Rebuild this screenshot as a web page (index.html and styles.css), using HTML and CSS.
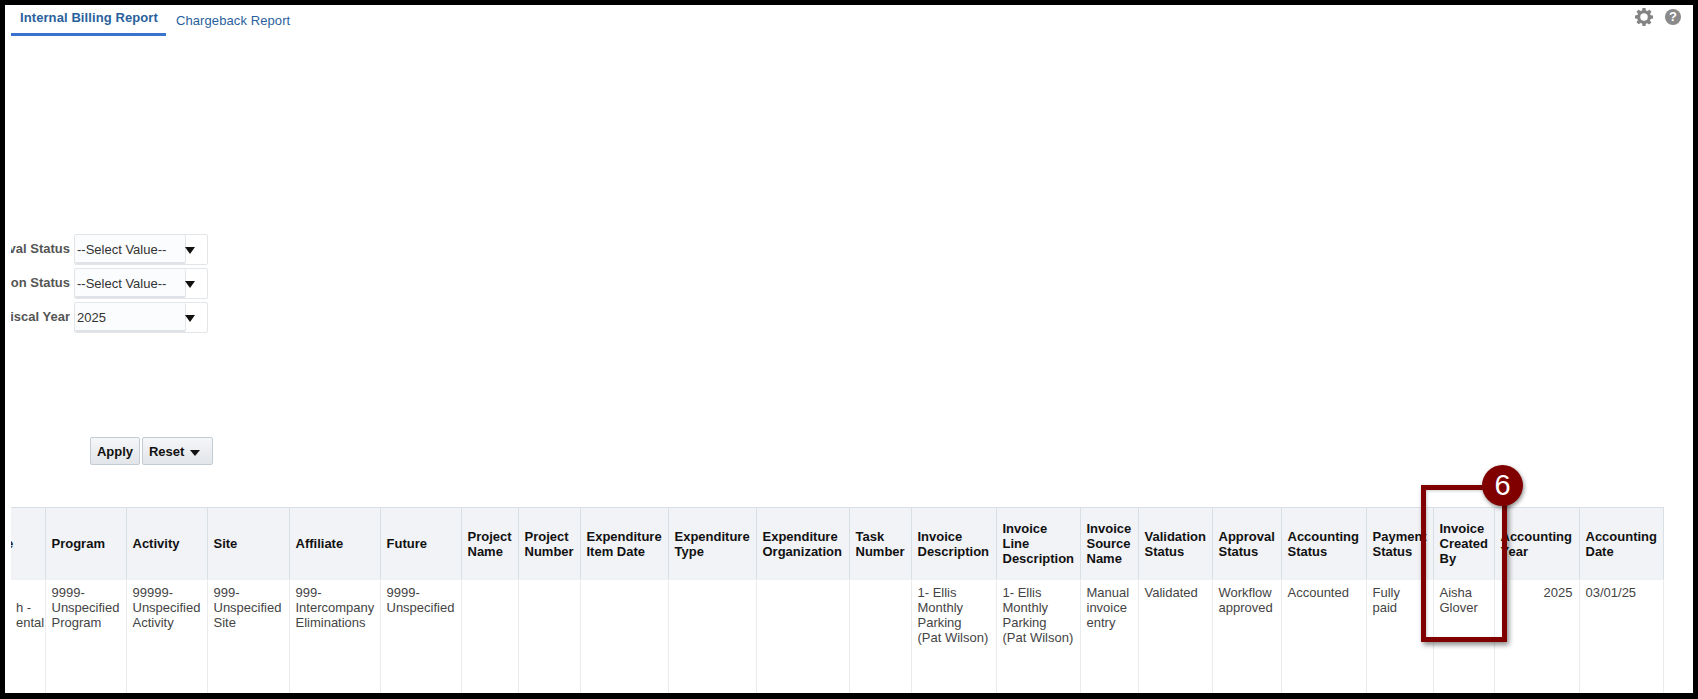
FILE: index.html
```html
<!DOCTYPE html>
<html lang="en">
<head>
<meta charset="utf-8">
<title>Internal Billing Report</title>
<link rel="stylesheet" href="styles.css">
</head>
<body>
<div class="frame">
  <div class="tabs">
    <a class="tab tab-active">Internal Billing Report</a>
    <a class="tab tab-plain">Chargeback Report</a>
    <div class="tools">
      <svg class="gear" viewBox="0 0 24 24" width="18" height="18"><path fill="#848484" fill-rule="evenodd" d="M10 0h4l.6 3.200 1.900.8 2.700-1.800 2.800 2.800-1.800 2.700.8 1.900L24 10v4l-3.200.6-.8 1.900 1.800 2.700-2.800 2.800-2.700-1.800-1.900.8L14 24h-4l-.6-3.200-1.900-.8-2.700 1.800L2 19l1.800-2.700-.8-1.900L0 14v-4l3.200-.6.8-1.900L2 5l2.800-2.800 2.700 1.800 1.900-.8L10 0zm2 7a5 5 0 1 0 0 10 5 5 0 0 0 0-10z"/></svg>
      <span class="help">?</span>
    </div>
  </div>

  <div class="filters">
    <div class="filter"><span class="flabel"><span>Approval Status</span></span><div class="select"><span class="svalue">--Select Value--</span><span class="arrow"></span></div></div>
    <div class="filter"><span class="flabel"><span>Validation Status</span></span><div class="select"><span class="svalue">--Select Value--</span><span class="arrow"></span></div></div>
    <div class="filter"><span class="flabel"><span>Fiscal Year</span></span><div class="select"><span class="svalue">2025</span><span class="arrow"></span></div></div>
  </div>

  <div class="actions">
    <button class="btn btn-apply">Apply</button>
    <button class="btn btn-reset">Reset <span class="arrow small"></span></button>
  </div>

  <div class="tablewrap">
    <table class="report">
      <colgroup>
        <col class="c34"><col class="c81"><col class="c81"><col class="c82"><col class="c91"><col class="c81"><col class="c57"><col class="c62"><col class="c88"><col class="c88"><col class="c93"><col class="c62"><col class="c85"><col class="c84"><col class="c58"><col class="c74"><col class="c69"><col class="c85"><col class="c67"><col class="c61"><col class="c85"><col class="c84">
      </colgroup>
      <thead>
        <tr>
          <th class="cut"><span class="cut-text">e</span></th>
          <th>Program</th><th>Activity</th><th>Site</th><th>Affiliate</th><th>Future</th>
          <th>Project Name</th><th>Project Number</th><th>Expenditure Item Date</th><th>Expenditure Type</th><th>Expenditure Organization</th><th>Task Number</th>
          <th>Invoice Description</th><th>Invoice Line Description</th><th>Invoice Source Name</th><th>Validation Status</th><th>Approval Status</th><th>Accounting Status</th><th>Payment Status</th><th>Invoice Created By</th><th>Accounting Year</th><th>Accounting Date</th>
        </tr>
      </thead>
      <tbody>
        <tr>
          <td class="cut"><br>h -<br>ental</td>
          <td>9999-<br>Unspecified Program</td>
          <td>99999-<br>Unspecified Activity</td>
          <td>999-<br>Unspecified Site</td>
          <td>999-<br>Intercompany Eliminations</td>
          <td>9999-<br>Unspecified</td>
          <td></td><td></td><td></td><td></td><td></td><td></td>
          <td>1- Ellis<br>Monthly<br>Parking<br>(Pat Wilson)</td>
          <td>1- Ellis<br>Monthly<br>Parking<br>(Pat Wilson)</td>
          <td>Manual invoice entry</td>
          <td>Validated</td>
          <td>Workflow approved</td>
          <td>Accounted</td>
          <td>Fully<br>paid</td>
          <td>Aisha Glover</td>
          <td class="num">2025</td>
          <td>03/01/25</td>
        </tr>
      </tbody>
    </table>
  </div>

  <div class="callout"></div>
  <div class="badge">6</div>
</div>
</body>
</html>
```

FILE: styles.css
```css
* { box-sizing: border-box; }
html, body { margin: 0; padding: 0; }
body { font-family: "Liberation Sans", Arial, sans-serif; font-size: 13px; background: #fff; }

.frame {
  position: relative;
  width: 1698px;
  height: 699px;
  border: solid #000;
  border-width: 5px 5px 6px 5px;
  background: #fff;
  display: flex;
  flex-direction: column;
  overflow: hidden;
}

/* Tabs */
.tabs { display: flex; align-items: flex-start; height: 31px; padding-left: 6px; flex: none; }
.tab { color: #2a5f9e; font-size: 13px; white-space: nowrap; letter-spacing: .09px; }
.tab-active { font-weight: bold; height: 31px; padding: 5px 9px 0 9px; width: 155px; border-bottom: 3px solid #3a72cf; }
.tab-plain { margin-left: 10px; padding-top: 8px; }
.tools { margin-left: auto; display: flex; align-items: center; gap: 12px; padding: 3px 12px 0 0; }
.gear { display: block; }
.help {
  width: 16px; height: 16px; border-radius: 50%;
  background: #8a8a8a; color: #fff;
  font-weight: bold; font-size: 13px; line-height: 16px; text-align: center;
}

/* Filters */
.filters { margin-top: 198px; display: flex; flex-direction: column; gap: 3px; flex: none; }
.filter { display: flex; align-items: center; height: 31px; padding-left: 6px; }
.flabel {
  width: 59px; display: flex; justify-content: flex-end; overflow: hidden;
  white-space: nowrap; font-weight: bold; color: #555; margin-top: -3px;
}
.flabel span { flex: none; }
.select {
  margin-left: 4px; width: 134px; height: 31px;
  border: 1px solid #e3e6e9; border-radius: 2px;
  display: flex; align-items: center; position: relative;
}
.svalue {
  width: 111px; height: 29px; padding: 0 2px; line-height: 29px;
  background: #fbfcfe; color: #333;
  border-right: 1px solid #e3e6e9; border-bottom: 2px solid #dfe2e6; border-radius: 2px;
}
.arrow {
  display: inline-block; width: 0; height: 0; margin-left: 0;
  border-left: 5px solid transparent; border-right: 5px solid transparent; border-top: 7px solid #111;
}
.select .arrow { position: relative; left: -1px; top: 1px; }
.arrow.small { border-left-width: 5px; border-right-width: 5px; border-top-width: 6px; margin-left: 2px; }

/* Buttons */
.actions { margin-top: 104px; padding-left: 85px; display: flex; gap: 2px; flex: none; }
.btn {
  height: 28px; padding: 0; font: bold 13px "Liberation Sans", Arial, sans-serif; color: #111;
  background: linear-gradient(#f5f6f8, #e2e5e9);
  border: 1px solid #c3ccd4; border-radius: 2px;
}
.btn-apply { width: 50px; }
.btn-reset { width: 71px; padding-right: 6px; }

/* Table */
.tablewrap { margin: 42px 0 0 6px; width: 1653px; flex: 1; min-height: 0; overflow: hidden; }
.report { border-collapse: collapse; table-layout: fixed; width: 1652px; }
.c34 { width: 34px; } .c57 { width: 57px; } .c58 { width: 58px; } .c61 { width: 61px; } .c62 { width: 62px; }
.c67 { width: 67px; } .c69 { width: 69px; } .c74 { width: 74px; } .c81 { width: 81px; } .c82 { width: 82px; }
.c84 { width: 84px; } .c85 { width: 85px; } .c88 { width: 88px; } .c91 { width: 91px; } .c93 { width: 93px; }

.report th {
  height: 72px; padding: 0 3px 0 6px; background: #f1f3f7;
  border: 1px solid #d8e0e6; border-bottom-color: #eef0f3;
  font-weight: bold; text-align: left; line-height: 15px; color: #111; vertical-align: middle;
}
.report td {
  height: 180px; padding: 5px 3px 0 6px; vertical-align: top; line-height: 15px;
  color: #444; border: 1px solid #e8ecef;
}
.report .cut { border-left: 0; overflow: hidden; padding-left: 5px; white-space: nowrap; }
.report th.cut { padding-left: 0; }
.cut-text { margin-left: -5px; }
.report .num { text-align: right; padding-right: 6px; }

/* Annotation */
.callout {
  position: absolute; left: 1416px; top: 480px; width: 86px; height: 157px;
  border: 5px solid #800000;
  box-shadow: 2px 3px 5px rgba(0,0,0,.45), inset 1px 1px 3px rgba(0,0,0,.2);
}
.badge {
  position: absolute; left: 1477px; top: 460px; width: 41px; height: 41px; border-radius: 50%;
  background: #800000; color: #fff; font-size: 29px; line-height: 40px; text-align: center;
  box-shadow: 1px 2px 4px rgba(0,0,0,.45);
}
```
